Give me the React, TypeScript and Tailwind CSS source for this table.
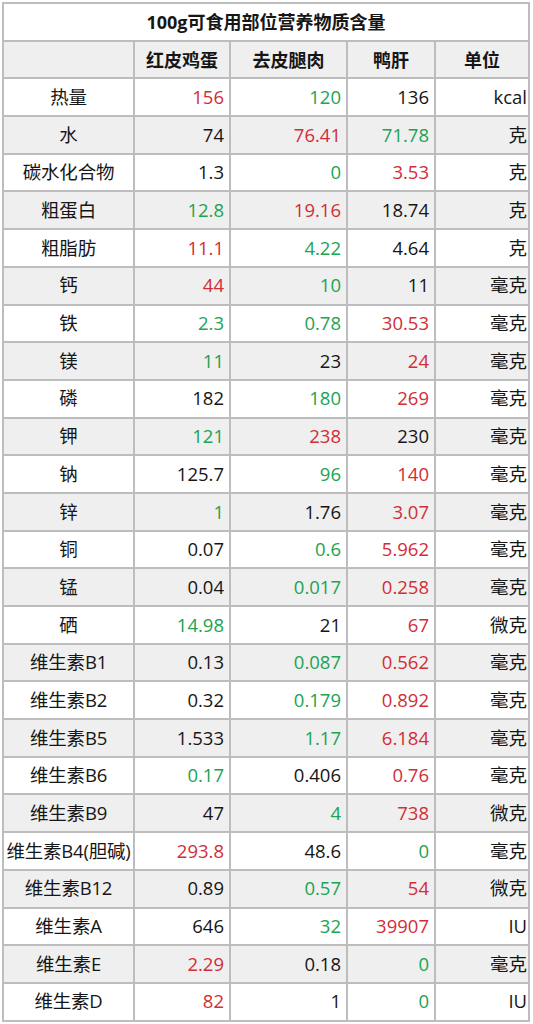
import React from 'react';

type Tone = 'r' | 'g' | '';

// [名称, 红皮鸡蛋, 去皮腿肉, 鸭肝, 单位]; each value carries its colour tone
const rows: [string, [string, Tone], [string, Tone], [string, Tone], string][] = [
  ['热量', ['156', 'r'], ['120', 'g'], ['136', ''], 'kcal'],
  ['水', ['74', ''], ['76.41', 'r'], ['71.78', 'g'], '克'],
  ['碳水化合物', ['1.3', ''], ['0', 'g'], ['3.53', 'r'], '克'],
  ['粗蛋白', ['12.8', 'g'], ['19.16', 'r'], ['18.74', ''], '克'],
  ['粗脂肪', ['11.1', 'r'], ['4.22', 'g'], ['4.64', ''], '克'],
  ['钙', ['44', 'r'], ['10', 'g'], ['11', ''], '毫克'],
  ['铁', ['2.3', 'g'], ['0.78', 'g'], ['30.53', 'r'], '毫克'],
  ['镁', ['11', 'g'], ['23', ''], ['24', 'r'], '毫克'],
  ['磷', ['182', ''], ['180', 'g'], ['269', 'r'], '毫克'],
  ['钾', ['121', 'g'], ['238', 'r'], ['230', ''], '毫克'],
  ['钠', ['125.7', ''], ['96', 'g'], ['140', 'r'], '毫克'],
  ['锌', ['1', 'g'], ['1.76', ''], ['3.07', 'r'], '毫克'],
  ['铜', ['0.07', ''], ['0.6', 'g'], ['5.962', 'r'], '毫克'],
  ['锰', ['0.04', ''], ['0.017', 'g'], ['0.258', 'r'], '毫克'],
  ['硒', ['14.98', 'g'], ['21', ''], ['67', 'r'], '微克'],
  ['维生素B1', ['0.13', ''], ['0.087', 'g'], ['0.562', 'r'], '毫克'],
  ['维生素B2', ['0.32', ''], ['0.179', 'g'], ['0.892', 'r'], '毫克'],
  ['维生素B5', ['1.533', ''], ['1.17', 'g'], ['6.184', 'r'], '毫克'],
  ['维生素B6', ['0.17', 'g'], ['0.406', ''], ['0.76', 'r'], '毫克'],
  ['维生素B9', ['47', ''], ['4', 'g'], ['738', 'r'], '微克'],
  ['维生素B4(胆碱)', ['293.8', 'r'], ['48.6', ''], ['0', 'g'], '毫克'],
  ['维生素B12', ['0.89', ''], ['0.57', 'g'], ['54', 'r'], '微克'],
  ['维生素A', ['646', ''], ['32', 'g'], ['39907', 'r'], 'IU'],
  ['维生素E', ['2.29', 'r'], ['0.18', ''], ['0', 'g'], '毫克'],
  ['维生素D', ['82', 'r'], ['1', ''], ['0', 'g'], 'IU'],
];

const toneClass = (t: Tone) =>
  t === 'r' ? 'text-[#d12e35]' : t === 'g' ? 'text-[#20a352]' : 'text-[#161616]';

const cell = 'border-2 border-[#bdbdbd] p-0 h-[37.7px] leading-none';

const App = () => {
  return (
    <div
      className="min-h-screen bg-white pl-[2px] pt-[2px]"
      style={{ fontFamily: '"Open Sans", "Noto Sans CJK SC", sans-serif' }}
    >
      <table className="border-collapse table-fixed w-[526px] text-[18.5px] text-[#161616]">
        <colgroup>
          <col className="w-[131px]" />
          <col className="w-[96px]" />
          <col className="w-[117px]" />
          <col className="w-[88px]" />
          <col className="w-[94px]" />
        </colgroup>
        <thead>
          <tr>
            <th colSpan={5} className={`${cell} bg-white font-bold text-center text-[18px]`}>
              100g可食用部位营养物质含量
            </th>
          </tr>
          <tr className="bg-[#efefef]">
            <th className={cell}></th>
            <th className={`${cell} font-bold text-center text-[18px]`}>红皮鸡蛋</th>
            <th className={`${cell} font-bold text-center text-[18px]`}>去皮腿肉</th>
            <th className={`${cell} font-bold text-center text-[18px]`}>鸭肝</th>
            <th className={`${cell} font-bold text-center text-[18px]`}>单位</th>
          </tr>
        </thead>
        <tbody>
          {rows.map((row, i) => (
            <tr key={row[0]} className={i % 2 === 1 ? 'bg-[#efefef]' : 'bg-white'}>
              <td className={`${cell} text-center whitespace-nowrap tracking-[-0.2px]`}>{row[0]}</td>
              {[row[1], row[2], row[3]].map(([v, t], j) => (
                <td key={j} className={`${cell} text-right pr-[5px] ${toneClass(t)}`}>
                  {v}
                </td>
              ))}
              <td className={`${cell} text-right pr-[1px]`}>{row[4]}</td>
            </tr>
          ))}
        </tbody>
      </table>
    </div>
  );
};

export default App;
